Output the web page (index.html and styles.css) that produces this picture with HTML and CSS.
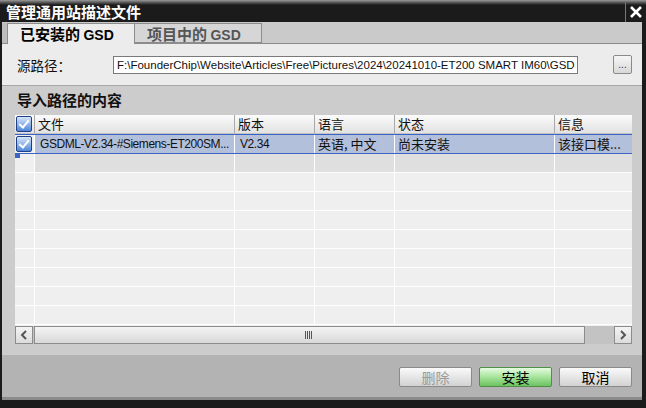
FILE: index.html
```html
<!DOCTYPE html>
<html lang="zh-CN">
<head>
    <meta charset="UTF-8">
    <title>管理通用站描述文件</title>
    <link rel="stylesheet" href="styles.css">
</head>
<body>
    <div class="window">
        <div class="titlebar">
            <span class="title">管理通用站描述文件</span>
            <span class="close">
                <svg width="14" height="14" viewBox="0 0 14 14"><path d="M2 2 L12 12 M12 2 L2 12" stroke="#fff" stroke-width="2.6"/></svg>
            </span>
        </div>

        <div class="frame">
            <!-- Tabs -->
            <div class="tabs">
                <div class="tab-edge"></div>
                <div class="tab active">已安装的 <span class="latin">GSD</span></div>
                <div class="tab">项目中的 <span class="latin">GSD</span></div>
            </div>

            <!-- Source path -->
            <div class="source">
                <span class="label">源路径：</span>
                <div class="path">F:\FounderChip\Website\Articles\Free\Pictures\2024\20241010-ET200 SMART IM60\GSD</div>
                <div class="browse">...</div>
            </div>

            <!-- Content of import path -->
            <div class="content">
                <h2 class="heading">导入路径的内容</h2>
                <div class="table">
                    <div class="row head">
                        <div class="cell check"><span class="box"></span></div>
                        <div class="cell">文件</div>
                        <div class="cell">版本</div>
                        <div class="cell">语言</div>
                        <div class="cell">状态</div>
                        <div class="cell">信息</div>
                    </div>
                    <div class="row selected">
                        <div class="cell check"><span class="box"></span></div>
                        <div class="cell latin">GSDML-V2.34-#Siemens-ET200SM...</div>
                        <div class="cell latin">V2.34</div>
                        <div class="cell">英语, 中文</div>
                        <div class="cell">尚未安装</div>
                        <div class="cell">该接口模...</div>
                    </div>
                    <div class="row new">
                        <div class="cell check"></div><div class="cell"></div><div class="cell"></div><div class="cell"></div><div class="cell"></div><div class="cell"></div>
                    </div>
                    <div class="row"><div class="cell"></div><div class="cell"></div><div class="cell"></div><div class="cell"></div><div class="cell"></div><div class="cell"></div></div>
                    <div class="row"><div class="cell"></div><div class="cell"></div><div class="cell"></div><div class="cell"></div><div class="cell"></div><div class="cell"></div></div>
                    <div class="row"><div class="cell"></div><div class="cell"></div><div class="cell"></div><div class="cell"></div><div class="cell"></div><div class="cell"></div></div>
                    <div class="row"><div class="cell"></div><div class="cell"></div><div class="cell"></div><div class="cell"></div><div class="cell"></div><div class="cell"></div></div>
                    <div class="row"><div class="cell"></div><div class="cell"></div><div class="cell"></div><div class="cell"></div><div class="cell"></div><div class="cell"></div></div>
                    <div class="row"><div class="cell"></div><div class="cell"></div><div class="cell"></div><div class="cell"></div><div class="cell"></div><div class="cell"></div></div>
                    <div class="row"><div class="cell"></div><div class="cell"></div><div class="cell"></div><div class="cell"></div><div class="cell"></div><div class="cell"></div></div>
                    <div class="row last"><div class="cell"></div><div class="cell"></div><div class="cell"></div><div class="cell"></div><div class="cell"></div><div class="cell"></div></div>
                    <span class="focus"></span>
                </div>

                <!-- Horizontal scrollbar -->
                <div class="hscroll">
                    <div class="arrow">
                        <svg width="8" height="10" viewBox="0 0 8 10"><path d="M6 1 L2 5 L6 9" fill="none" stroke="#555" stroke-width="2"/></svg>
                    </div>
                    <div class="thumb"><span class="grip"></span></div>
                    <div class="track"></div>
                    <div class="arrow">
                        <svg width="8" height="10" viewBox="0 0 8 10"><path d="M2 1 L6 5 L2 9" fill="none" stroke="#555" stroke-width="2"/></svg>
                    </div>
                </div>
            </div>

            <!-- Dialog buttons -->
            <div class="actions">
                <button class="btn" disabled>删除</button>
                <button class="btn primary">安装</button>
                <button class="btn">取消</button>
            </div>
        </div>
    </div>
</body>
</html>
```

FILE: styles.css
```css
* {
    margin: 0;
    padding: 0;
    box-sizing: border-box;
    font-family: "Noto Sans CJK SC", sans-serif;
}

body {
    background: #1b1b1b;
    width: 646px;
    height: 408px;
    overflow: hidden;
}

.latin {
    font-family: "Liberation Sans", "Noto Sans CJK SC", sans-serif;
}

.window {
    width: 646px;
    height: 408px;
    background: #1b1b1b;
    display: flex;
    flex-direction: column;
}

/* Title bar */
.titlebar {
    height: 22px;
    display: flex;
    align-items: center;
    justify-content: space-between;
    background: linear-gradient(#9a9a9a 0px, #4a4a4a 3px, #1b1b1b 5px, #1b1b1b 100%);
    padding-left: 6px;
}

.title {
    color: white;
    font-size: 15px;
    font-weight: 700;
    line-height: 22px;
    padding-top: 2px;
}

.close {
    width: 21px;
    height: 20px;
    margin-top: 2px;
    border-left: 1px solid #777;
    display: flex;
    align-items: center;
    justify-content: center;
}

/* Main frame */
.frame {
    margin: 0 4px 0 2px;
    height: 378px;
    display: flex;
    flex-direction: column;
    border-bottom: 3px solid #8a8a8a;
}

.tabs {
    height: 22px;
    display: flex;
    background: #cacaca;
    border-bottom: 1px solid #8c8c8c;
}

.tab-edge {
    width: 6px;
    margin-top: 1px;
    background: #bdbdbd;
    border-right: 1px solid #8c8c8c;
}

.tab {
    width: 127px;
    margin-top: 1px;
    padding-left: 12px;
    font-size: 15px;
    font-weight: 700;
    line-height: 20px;
    color: #555;
    background: #d6d6d6;
    border: 1px solid #8c8c8c;
    border-left: none;
}

.tab .latin {
    font-size: 14px;
}

.tab.active {
    color: #000;
    background: #ececec;
    height: 22px;
    border-bottom: none;
}

.source {
    height: 42px;
    background: #ececec;
    border-bottom: 1px solid #a6a6a6;
    display: flex;
    align-items: center;
    padding-left: 15px;
}

.label {
    width: 96px;
    font-size: 13.5px;
    color: #111;
}

.path {
    width: 465px;
    height: 18px;
    background: white;
    border: 1px solid #7a7a7a;
    padding-left: 3px;
    font-family: "Liberation Sans", sans-serif;
    font-size: 11.5px;
    line-height: 16px;
    color: #111;
    white-space: nowrap;
    overflow: hidden;
}

.browse {
    width: 19px;
    height: 19px;
    margin-left: 35px;
    border: 1px solid #8a8a8a;
    border-radius: 2px;
    background: linear-gradient(#f6f6f6, #d8d8d8);
    font-family: "Liberation Sans", sans-serif;
    font-size: 10px;
    line-height: 17px;
    text-align: center;
    color: #333;
}

/* Content section */
.content {
    flex: 1;
    background: #cccccc;
    padding: 5px 0 0 13px;
}

.heading {
    font-size: 15px;
    font-weight: 700;
    line-height: 18px;
    height: 24px;
    padding-left: 2px;
    color: #111;
}

.table {
    position: relative;
    width: 617px;
    height: 211px;
    overflow: hidden;
    background: #efefef;
}

.row {
    display: grid;
    grid-template-columns: 20px 200px 80px 80px 160px 77px;
    height: 19px;
    border-bottom: 1px solid white;
}

.cell {
    border-right: 1px solid white;
    font-size: 13px;
    line-height: 18px;
    padding-left: 3px;
    color: #111;
    white-space: nowrap;
    overflow: hidden;
}

.cell:last-child {
    border-right: none;
}

.cell.latin {
    font-size: 12px;
    letter-spacing: -0.45px;
    padding-left: 5px;
}

.row.head {
    background: linear-gradient(#fbfbfb, #e2e2e2);
    border-bottom: 1px solid #c4c4c4;
}

.row.head .cell {
    border-right-color: #a9a9a9;
}

.row.selected {
    height: 20px;
    background: #b3c0dc;
    border-top: 1px solid #3a63c4;
    border-bottom: 1px solid #3a63c4;
}

.row.selected .cell.check {
    background: #efefef;
}

.row.new {
    background: #dfdfdf;
}

.row.new .cell.check {
    background: #efefef;
}

.cell.check {
    padding: 1px 0 0 1px;
}

.box {
    display: block;
    width: 16px;
    height: 16px;
    border: 1px solid #1f3f86;
    border-radius: 2px;
    background: linear-gradient(#d8e6f8, #4f86d8);
    position: relative;
}

.box::after {
    content: "";
    position: absolute;
    left: 4px;
    top: 1px;
    width: 4px;
    height: 8px;
    border: solid white;
    border-width: 0 2.5px 2.5px 0;
    transform: rotate(40deg);
}

.focus {
    position: absolute;
    left: 0;
    top: 38px;
    width: 5px;
    height: 5px;
    background: #3a63c4;
}

/* Scrollbar */
.hscroll {
    width: 617px;
    height: 18px;
    display: flex;
    background: #c3c3c3;
}

.arrow {
    width: 18px;
    height: 18px;
    border: 1px solid #8c8c8c;
    background: linear-gradient(#f4f4f4, #dcdcdc);
    display: flex;
    align-items: center;
    justify-content: center;
}

.thumb {
    width: 551px;
    margin-left: 1px;
    border: 1px solid #8c8c8c;
    background: linear-gradient(#f4f4f4, #d8d8d8);
    position: relative;
}

.grip {
    position: absolute;
    left: 270px;
    top: 4px;
    width: 7px;
    height: 8px;
    background: repeating-linear-gradient(90deg, #555 0 1px, transparent 1px 2px);
}

.track {
    flex: 1;
}

/* Buttons */
.actions {
    height: 42px;
    background: #b3b3b3;
    display: flex;
    justify-content: flex-end;
    align-items: flex-start;
    gap: 7px;
    padding: 12px 10px 0 0;
}

.btn {
    width: 73px;
    height: 20px;
    border: 1px solid #8a8a8a;
    border-radius: 2px;
    background: linear-gradient(#fafafa, #e6e6e6 50%, #d2d2d2);
    font-family: "Noto Sans CJK SC", sans-serif;
    font-size: 14px;
    line-height: 16px;
    color: #000;
}

.btn:disabled {
    color: #9a9a9a;
}

.btn.primary {
    background: linear-gradient(#e6fbe0, #a6e49b 50%, #6cc261);
    border-color: #4f8f48;
}
```
